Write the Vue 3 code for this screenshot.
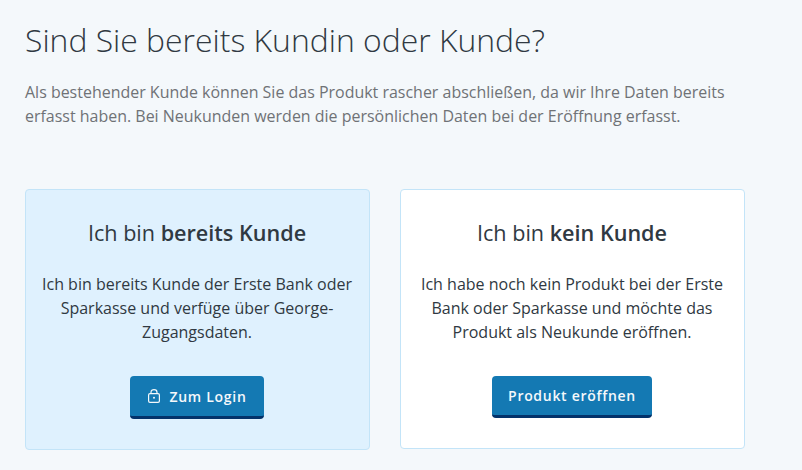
<template>
  <main class="page">
    <h1 class="title">Sind Sie bereits Kundin oder Kunde?</h1>
    <p class="intro">
      Als bestehender Kunde können Sie das Produkt rascher abschließen, da wir Ihre Daten bereits
      erfasst haben. Bei Neukunden werden die persönlichen Daten bei der Eröffnung erfasst.
    </p>
    <div class="cards">
      <section class="card card-active">
        <h2 class="card-title">Ich bin <strong>bereits Kunde</strong></h2>
        <p class="card-text">
          Ich bin bereits Kunde der Erste Bank oder Sparkasse und verfüge über George-Zugangsdaten.
        </p>
        <button class="btn" type="button">
          <svg class="lock" width="12" height="14" viewBox="0 0 12 14" fill="none" stroke="currentColor" stroke-width="1.2">
            <rect x="0.6" y="4.6" width="10.8" height="8.8" rx="1.4" />
            <path d="M3 4.5V3.2C3 1.6 4.3.6 6 .6s3 1 3 2.6v1.3" />
            <circle cx="6" cy="8.8" r="1" fill="currentColor" stroke="none" />
          </svg>
          Zum Login
        </button>
      </section>
      <section class="card">
        <h2 class="card-title">Ich bin <strong>kein Kunde</strong></h2>
        <p class="card-text">
          Ich habe noch kein Produkt bei der Erste Bank oder Sparkasse und möchte das Produkt als
          Neukunde eröffnen.
        </p>
        <button class="btn btn-wide" type="button">Produkt eröffnen</button>
      </section>
    </div>
  </main>
</template>

<script setup>
</script>

<style>
html,
body {
  margin: 0;
  background: #f4f8fb;
}
</style>

<style scoped>
.page {
  height: 470px;
  overflow: hidden;
  padding: 20px 0 0 25px;
  box-sizing: border-box;
  font-family: "Open Sans", sans-serif;
  color: #303942;
}

.title {
  margin: 0;
  font-size: 31.9px;
  font-weight: 300;
  line-height: 39px;
}

.intro {
  width: 720px;
  margin: 21px 0 0;
  font-size: 15.98px;
  line-height: 24px;
  color: #6f7276;
}

.cards {
  display: flex;
  align-items: flex-start;
  gap: 30px;
  margin-top: 61px;
}

.card {
  width: 345px;
  box-sizing: border-box;
  padding: 28px 16px 30px 15px;
  background: #fff;
  border: 1px solid #c3e4f8;
  border-radius: 4px;
  text-align: center;
}

.card-active {
  background: #dff1fe;
}

.card-title {
  margin: 0;
  font-size: 21.6px;
  font-weight: 400;
  line-height: 30px;
}

.card-title strong {
  font-weight: 600;
}

.card-text {
  margin: 24px 0 0;
  font-size: 16px;
  line-height: 24px;
}

.btn {
  display: inline-flex;
  align-items: center;
  justify-content: center;
  gap: 10px;
  width: 134px;
  height: 43px;
  margin-top: 32px;
  padding: 0;
  background: #1479b3;
  border: 0;
  border-bottom: 3px solid #03326a;
  border-radius: 4px;
  color: #f4f8fb;
  font-family: inherit;
  font-size: 14px;
  font-weight: 600;
  letter-spacing: 0.7px;
  vertical-align: top;
}

.btn-wide {
  width: 160px;
  height: 42px;
}

.lock {
  flex: none;
}
</style>
